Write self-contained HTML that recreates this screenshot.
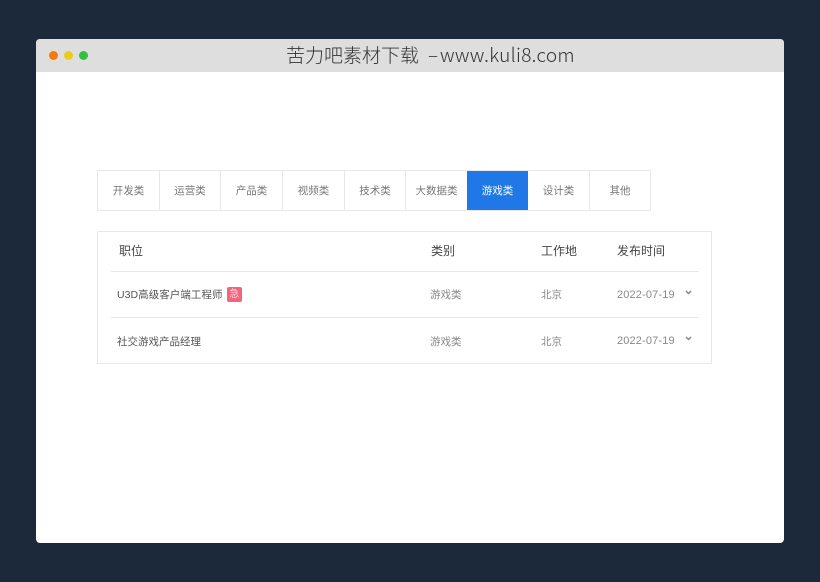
<!DOCTYPE html>
<html lang="zh">
<head>
<meta charset="utf-8">
<style>
html,body{margin:0;padding:0;width:820px;height:582px;overflow:hidden;background:#1c293b;font-family:"Liberation Sans","Noto Sans CJK SC",sans-serif;}
#page{position:absolute;left:0;top:0;width:820px;height:582px;background:#1c293b;filter:blur(0.3px);}
.a{position:absolute;white-space:nowrap;}
#win{position:absolute;left:36px;top:39px;width:748px;height:504px;background:#fff;border-radius:4px;overflow:hidden;}
#bar{position:absolute;left:36px;top:39px;width:748px;height:33px;background:#dedede;border-radius:4px 4px 0 0;}
.dot{position:absolute;top:51px;width:9px;height:9px;border-radius:50%;}
.ti{position:absolute;top:42px;height:26px;line-height:26px;font-size:19px;color:#333;white-space:nowrap;font-family:"WenQuanYi Zen Hei","Noto Sans CJK SC",sans-serif;font-weight:300;}
.box{position:absolute;box-sizing:border-box;border:1px solid #e8e8e8;}
.sep{position:absolute;top:171px;width:1px;height:39px;background:#e8e8e8;}
.tab{position:absolute;top:171px;height:39px;line-height:40px;text-align:center;font-size:10.5px;color:#777;white-space:nowrap;}
.h{position:absolute;top:243px;height:17px;line-height:17px;font-size:12px;color:#444;white-space:nowrap;}
.t{position:absolute;height:16px;line-height:16px;font-size:10.5px;color:#888;white-space:nowrap;}
.n{color:#555;}
.d{font-size:11px;letter-spacing:.15px;}
.line{position:absolute;left:111px;width:588px;height:1px;background:#e8e8e8;}
</style>
</head>
<body>
<div id="page">
<div id="win"></div>
<div id="bar"></div>
<div class="dot" style="left:48.5px;background:#f7790e;"></div>
<div class="dot" style="left:64px;background:#eeca1c;"></div>
<div class="dot" style="left:78.5px;background:#2fc23a;"></div>
<div class="ti" style="left:286px;">苦力吧素材下载</div>
<div class="ti" style="left:428px;">–</div>
<div class="ti" style="left:440px;letter-spacing:.3px;">www.kuli8.com</div>

<div class="box" style="left:97px;top:170px;width:554px;height:41px;"></div>
<div class="sep" style="left:159px;"></div>
<div class="sep" style="left:220px;"></div>
<div class="sep" style="left:282px;"></div>
<div class="sep" style="left:344px;"></div>
<div class="sep" style="left:405px;"></div>
<div class="sep" style="left:589px;"></div>
<div style="position:absolute;left:467px;top:171px;width:61px;height:39px;background:#1f78e6;"></div>
<div class="tab" style="left:98px;width:61px;">开发类</div>
<div class="tab" style="left:160px;width:60px;">运营类</div>
<div class="tab" style="left:221px;width:61px;">产品类</div>
<div class="tab" style="left:283px;width:61px;">视频类</div>
<div class="tab" style="left:345px;width:60px;">技术类</div>
<div class="tab" style="left:406px;width:61px;">大数据类</div>
<div class="tab" style="left:467px;width:61px;color:#fff;">游戏类</div>
<div class="tab" style="left:528px;width:61px;">设计类</div>
<div class="tab" style="left:590px;width:60px;">其他</div>

<div class="box" style="left:97px;top:231px;width:615px;height:133px;"></div>
<div class="h" style="left:119px;">职位</div>
<div class="h" style="left:431px;">类别</div>
<div class="h" style="left:541px;">工作地</div>
<div class="h" style="left:617px;">发布时间</div>
<div class="line" style="top:271px;"></div>
<div class="line" style="top:317px;"></div>

<div class="t n" style="left:117px;top:287px;letter-spacing:.05px;">U3D高级客户端工程师</div>
<div class="a" style="left:227px;top:287px;width:14.5px;height:14.5px;background:#f2637c;border-radius:2px;color:#fbd3da;font-size:10px;line-height:15px;text-align:center;">急</div>
<div class="t" style="left:430px;top:287px;">游戏类</div>
<div class="t" style="left:541px;top:287px;">北京</div>
<div class="t d" style="left:617px;top:287px;">2022-07-19</div>
<svg style="position:absolute;left:685px;top:290px;" width="7" height="5" viewBox="0 0 7 5"><path d="M1 1 L3.5 3.5 L6 1" fill="none" stroke="#888" stroke-width="1.5"/></svg>

<div class="t n" style="left:117px;top:334px;">社交游戏产品经理</div>
<div class="t" style="left:430px;top:334px;">游戏类</div>
<div class="t" style="left:541px;top:334px;">北京</div>
<div class="t d" style="left:617px;top:333px;">2022-07-19</div>
<svg style="position:absolute;left:685px;top:336px;" width="7" height="5" viewBox="0 0 7 5"><path d="M1 1 L3.5 3.5 L6 1" fill="none" stroke="#888" stroke-width="1.5"/></svg>
</div>
</body>
</html>
